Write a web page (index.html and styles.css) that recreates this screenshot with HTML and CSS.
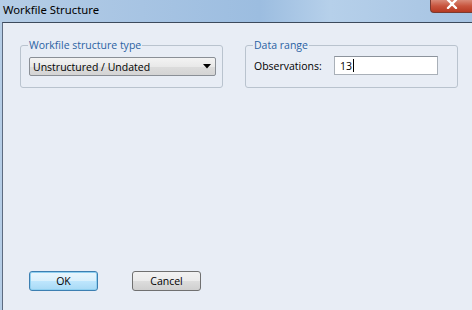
FILE: index.html
```html
<!DOCTYPE html>
<html>
<head>
<meta charset="utf-8">
<link rel="stylesheet" href="styles.css">
</head>
<body>
<div class="window">
  <div class="titlebar">
    <span class="title">Workfile Structure</span>
    <span class="close"><svg width="14" height="10" viewBox="0 0 14 10"><path d="M3 1 L11 9 M11 1 L3 9" stroke="#fff" stroke-width="2.4" stroke-linecap="round"/></svg></span>
  </div>
  <div class="frame">
    <div class="groups">
      <fieldset class="group g1">
        <legend>Workfile structure type</legend>
        <div class="select">
          <span>Unstructured / Undated</span>
          <svg class="arrow" width="8" height="5" viewBox="0 0 8 5"><path d="M0 0 H8 L4 4.5 Z" fill="#000"/></svg>
        </div>
      </fieldset>
      <fieldset class="group g2">
        <legend>Data range</legend>
        <div class="row">
          <span class="label">Observations:</span>
          <div class="input"><span>13</span><span class="caret"></span></div>
        </div>
      </fieldset>
    </div>
    <div class="buttons">
      <div class="btn ok">OK</div>
      <div class="btn">Cancel</div>
    </div>
  </div>
</div>
</body>
</html>
```
FILE: styles.css
```css
html, body {
  margin: 0;
  padding: 0;
  width: 472px;
  height: 310px;
  overflow: hidden;
  font-family: "Open Sans", "DejaVu Sans", sans-serif;
}
.window {
  display: flex;
  flex-direction: column;
  width: 472px;
  height: 310px;
  background: linear-gradient(90deg, #b5cde6 0%, #a7c4e3 30%, #9cbde0 55%, #b6d0ea 70%, #a6c3e2 100%);
}
.titlebar {
  height: 22px;
  display: flex;
  justify-content: space-between;
  align-items: flex-start;
  flex: none;
}
.title {
  font-family: "Noto Sans", sans-serif;
  font-size: 11.3px;
  color: #000;
  padding: 2px 0 0 3px;
  line-height: 16px;
}
.close {
  width: 42px;
  height: 13px;
  background: linear-gradient(180deg, #d98a78 0%, #c8553e 50%, #b63a22 100%);
  border: 1px solid #7a3a30;
  border-top: none;
  border-right: none;
  border-radius: 0 0 0 4px;
  display: flex;
  justify-content: center;
  align-items: flex-start;
  box-sizing: border-box;
}
.close svg { margin-top: -1px; }
.frame {
  flex: 1;
  margin-left: 2px;
  border-top: 1px solid #3c4a5c;
  border-left: 1px solid #5d6b80;
  background: #e8edf5;
  display: flex;
  flex-direction: column;
  justify-content: space-between;
}
.groups {
  display: flex;
  gap: 22px;
  padding: 16px 0 0 17px;
}
.group {
  margin: 0;
  border: 1px solid #b9c3ce;
  border-radius: 3px;
  padding: 0 8px 0 8px;
  font-size: 10.5px;
  box-sizing: border-box;
  height: 49px;
  min-width: 0;
}
.group legend {
  color: #2a62a3;
  padding: 0 1px;
  margin-left: -1px;
  font-size: 10.5px;
  line-height: 13px;
}
.g1 { width: 203px; }
.g2 { width: 213px; }
.select {
  margin-top: 5px;
  height: 19px;
  width: 187px;
  box-sizing: border-box;
  border: 1px solid #8a8f96;
  border-radius: 2px;
  background: linear-gradient(180deg, #f3f3f3 0%, #e9e9e9 50%, #dcdcdc 51%, #d4d4d4 100%);
  display: flex;
  align-items: center;
  justify-content: space-between;
  padding: 0 4px 0 3px;
  color: #000;
}
.row {
  display: flex;
  align-items: center;
  margin-top: 4px;
}
.label {
  width: 80px;
  color: #000;
}
.input {
  width: 104px;
  height: 19px;
  box-sizing: border-box;
  border: 1px solid #a9b0b8;
  border-top-color: #8c939c;
  background: #fff;
  display: flex;
  align-items: center;
  padding-left: 5px;
  color: #000;
}
.caret {
  width: 1px;
  height: 13px;
  background: #000;
  margin-left: 1px;
}
.buttons {
  display: flex;
  gap: 34px;
  padding: 0 0 19px 26px;
}
.btn {
  width: 69px;
  height: 20px;
  box-sizing: border-box;
  border: 1px solid #707070;
  border-radius: 3px;
  background: linear-gradient(180deg, #f2f2f2 0%, #ebebeb 50%, #dddddd 51%, #cfcfcf 100%);
  font-size: 10.5px;
  display: flex;
  align-items: center;
  justify-content: center;
  color: #000;
}
.btn.ok {
  border-color: #3c7fb1;
  background: linear-gradient(180deg, #eaf6fd 0%, #d9f0fc 50%, #bee6fd 51%, #a7d9f5 100%);
  box-shadow: inset 0 0 0 1px #90d0f0;
}
```
